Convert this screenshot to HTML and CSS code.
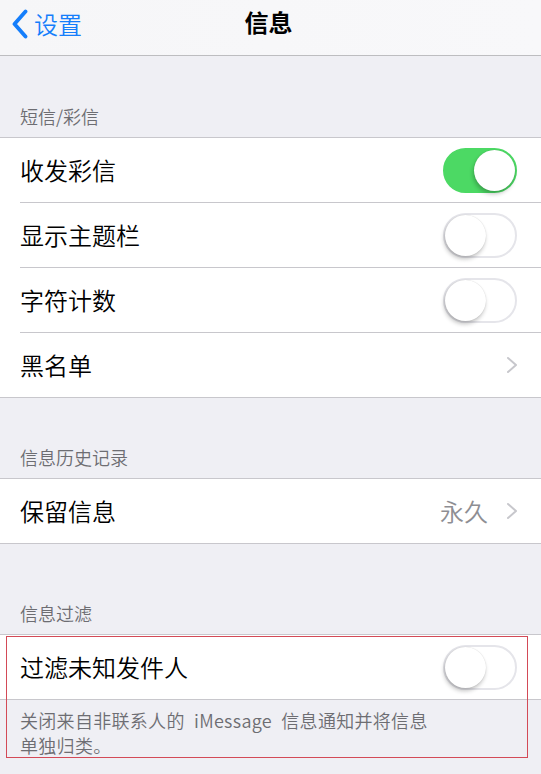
FILE: index.html
```html
<!DOCTYPE html>
<html lang="zh-CN">
<head>
  <meta charset="UTF-8">
  <meta name="viewport" content="width=device-width, initial-scale=1.0">
  <title>信息</title>
  <link rel="stylesheet" href="styles.css">
</head>
<body>
  <header class="nav-bar">
    <a class="nav-back" href="#">
      <svg class="nav-back-icon" width="18" height="30" viewBox="0 0 18 30">
        <path d="M14.5 2.5 L3.5 15 L14.5 27.5" fill="none" stroke="#157efb" stroke-width="3.8" stroke-linecap="round" stroke-linejoin="round"/>
      </svg>
      <span>设置</span>
    </a>
    <h1 class="nav-title">信息</h1>
    <div class="nav-spacer"></div>
  </header>

  <main class="settings">
    <section class="settings-section">
      <div class="section-header">短信/彩信</div>
      <div class="group">
        <div class="row">
          <div class="row-body">
            <span class="row-label">收发彩信</span>
            <span class="switch on"><span class="switch-knob"></span></span>
          </div>
        </div>
        <div class="row">
          <div class="row-body">
            <span class="row-label">显示主题栏</span>
            <span class="switch"><span class="switch-knob"></span></span>
          </div>
        </div>
        <div class="row">
          <div class="row-body">
            <span class="row-label">字符计数</span>
            <span class="switch"><span class="switch-knob"></span></span>
          </div>
        </div>
        <div class="row">
          <div class="row-body">
            <span class="row-label">黑名单</span>
            <span class="row-accessory">
              <svg class="chevron" width="12" height="18" viewBox="0 0 12 18">
                <path d="M2 2 L10 9 L2 16" fill="none" stroke="#c7c7cc" stroke-width="2" stroke-linecap="round" stroke-linejoin="round"/>
              </svg>
            </span>
          </div>
        </div>
      </div>
    </section>

    <section class="settings-section">
      <div class="section-header section-header-short">信息历史记录</div>
      <div class="group">
        <div class="row">
          <div class="row-body">
            <span class="row-label">保留信息</span>
            <span class="row-accessory">
              <span class="row-value">永久</span>
              <svg class="chevron" width="12" height="18" viewBox="0 0 12 18">
                <path d="M2 2 L10 9 L2 16" fill="none" stroke="#c7c7cc" stroke-width="2" stroke-linecap="round" stroke-linejoin="round"/>
              </svg>
            </span>
          </div>
        </div>
      </div>
    </section>

    <section class="settings-section">
      <div class="section-header section-header-tall">信息过滤</div>
      <div class="filter-block">
        <div class="group">
          <div class="row">
            <div class="row-body">
              <span class="row-label">过滤未知发件人</span>
              <span class="switch"><span class="switch-knob"></span></span>
            </div>
          </div>
        </div>
        <p class="section-footer">关闭来自非联系人的 iMessage 信息通知并将信息<br>单独归类。</p>
        <div class="highlight-box"></div>
      </div>
    </section>
  </main>
</body>
</html>
```

FILE: styles.css
```css
body {
  margin: 0;
  padding: 0;
  background: #efeff4;
  color: #000;
  font-family: "Noto Sans CJK SC", "Noto Sans", sans-serif;
  font-weight: 350;
}

/* nav bar */
.nav-bar {
  display: grid;
  grid-template-columns: 1fr auto 1fr;
  align-items: start;
  height: 47px;
  padding-top: 8px;
  background: linear-gradient(90deg, #f6f6f8, #f8f8fa);
  border-bottom: 1px solid #bdbdc0;
}
.nav-back {
  display: flex;
  align-items: center;
  gap: 5px;
  padding-left: 11px;
  color: #157efb;
  text-decoration: none;
  font-size: 24px;
  line-height: 24px;
}
.nav-back-icon {
  margin-top: 1px;
}
.nav-title {
  margin: 0;
  margin-right: 4px;
  padding-top: 2px;
  font-size: 24px;
  line-height: 24px;
  font-weight: 700;
}

/* sections */
.section-header {
  padding: 48px 20px 9px;
  font-size: 18px;
  line-height: 24px;
  color: #6d6d72;
}
.section-header-short {
  padding-top: 47px;
}
.section-header-tall {
  padding-top: 57px;
}

.group {
  background: #fff;
  border-top: 1px solid #c8c7cc;
  border-bottom: 1px solid #c8c7cc;
}
.row {
  padding-left: 20px;
}
.row-body {
  display: flex;
  align-items: center;
  justify-content: space-between;
  height: 64px;
  padding-right: 24px;
  border-bottom: 1px solid #c8c7cc;
}
.row:last-child .row-body {
  border-bottom: none;
}
.row-label {
  font-size: 24px;
  line-height: 30px;
}
.row-accessory {
  display: flex;
  align-items: center;
  gap: 18px;
}
.row-value {
  font-size: 24px;
  line-height: 30px;
  color: #8e8e93;
}
.chevron {
  display: block;
  margin-right: -1px;
}

/* switch */
.switch {
  position: relative;
  display: block;
  width: 74px;
  height: 45px;
  box-sizing: border-box;
  border-radius: 23px;
  border: 2px solid #e5e5ea;
  background: #fff;
}
.switch.on {
  background: #4cd964;
  border-color: #4cd964;
}
.switch-knob {
  position: absolute;
  top: 0;
  left: 0;
  width: 41px;
  height: 41px;
  border-radius: 50%;
  background: #fff;
  box-shadow: -1px 3px 4px rgba(0, 0, 0, 0.24), 0 0 1px rgba(0, 0, 0, 0.18);
}
.switch.on .switch-knob {
  left: auto;
  right: 0;
}

/* footer */
.filter-block {
  position: relative;
}
.section-footer {
  margin: 0;
  padding: 8px 20px 0;
  font-size: 18px;
  line-height: 25px;
  word-spacing: 5px;
  letter-spacing: 0.3px;
  color: #6d6d72;
}
.highlight-box {
  position: absolute;
  top: 2px;
  left: 6px;
  width: 520px;
  height: 120px;
  border: 1px solid #d34a57;
  pointer-events: none;
}
```
